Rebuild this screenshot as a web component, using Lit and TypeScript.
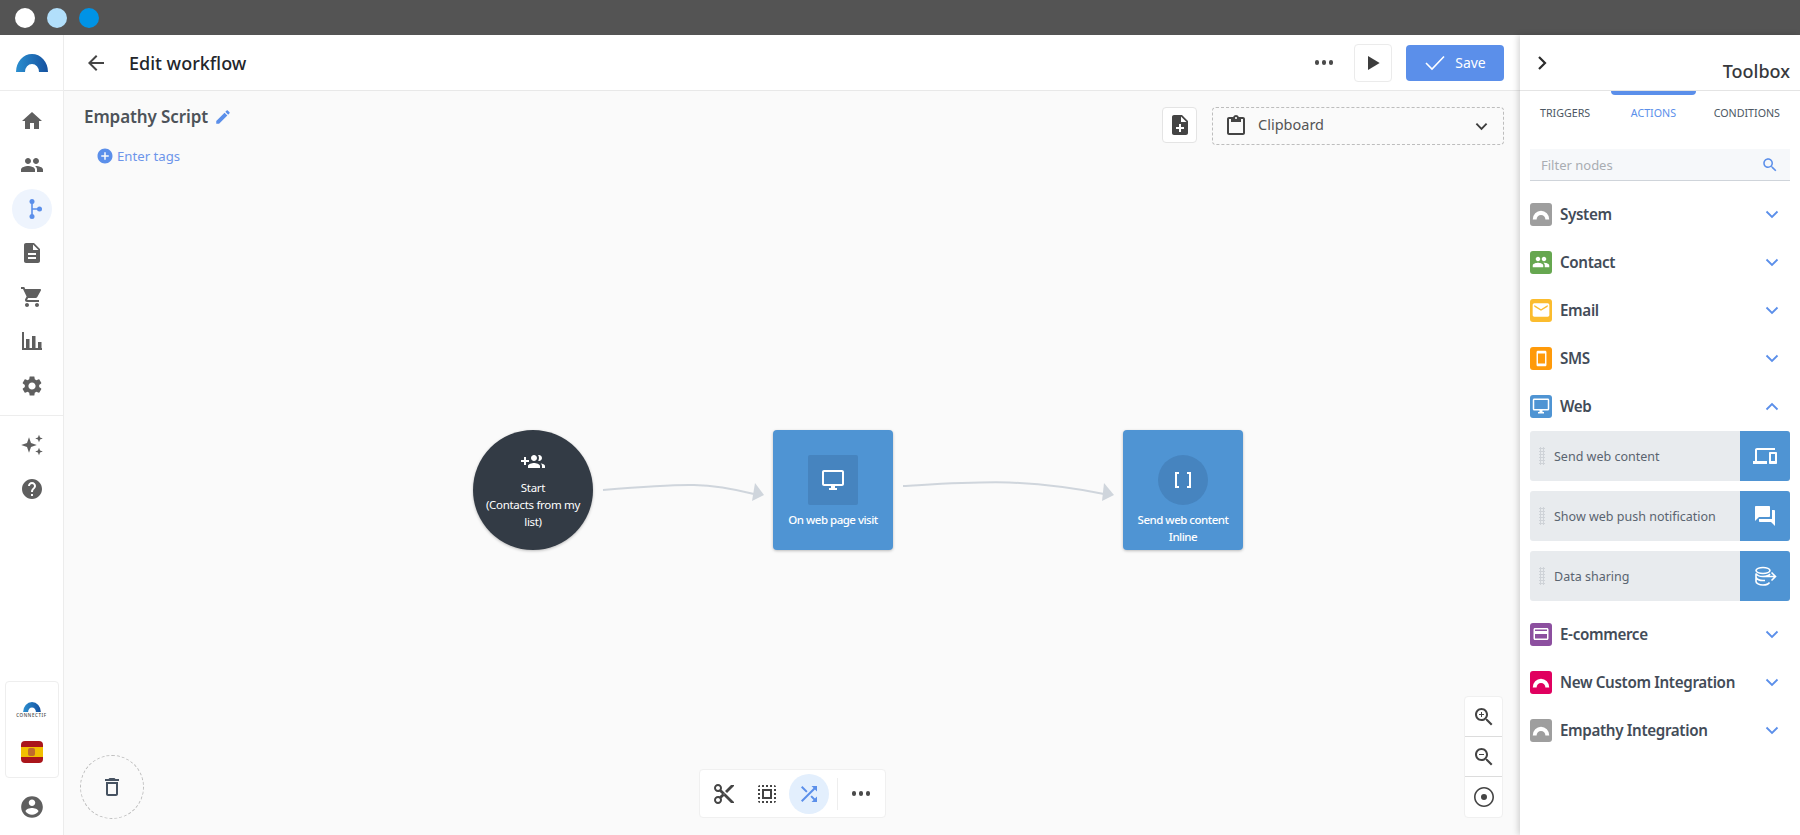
import { LitElement, html, css } from "lit";
import { customElement } from "lit/decorators.js";

const P: Record<string, string> = {
  home: "M10 20v-6h4v6h5v-8h3L12 3 2 12h3v8z",
  people: "M16 11c1.66 0 2.99-1.34 2.99-3S17.66 5 16 5c-1.66 0-3 1.34-3 3s1.34 3 3 3zm-8 0c1.66 0 2.99-1.34 2.99-3S9.66 5 8 5C6.34 5 5 6.34 5 8s1.34 3 3 3zm0 2c-2.33 0-7 1.17-7 3.5V19h14v-2.5c0-2.33-4.67-3.5-7-3.5zm8 0c-.29 0-.62.02-.97.05 1.16.84 1.97 1.97 1.97 3.45V19h6v-2.5c0-2.33-4.67-3.5-7-3.5z",
  doc: "M14 2H6c-1.1 0-1.99.9-1.99 2L4 20c0 1.1.89 2 1.99 2H18c1.1 0 2-.9 2-2V8l-6-6zm2 16H8v-2h8v2zm0-4H8v-2h8v2zm-3-5V3.5L18.5 9H13z",
  cart: "M7 18c-1.1 0-1.99.9-1.99 2S5.9 22 7 22s2-.9 2-2-.9-2-2-2zM1 2v2h2l3.6 7.59-1.35 2.45c-.16.28-.25.61-.25.96 0 1.1.9 2 2 2h12v-2H7.42c-.14 0-.25-.11-.25-.25l.03-.12.9-1.63h7.45c.75 0 1.41-.41 1.75-1.03l3.58-6.49c.08-.14.12-.31.12-.48 0-.55-.45-1-1-1H5.21l-.94-2H1zm16 16c-1.1 0-1.99.9-1.99 2s.89 2 1.99 2 2-.9 2-2-.9-2-2-2z",
  bars: "M2 3h2v16h18v2H2zM6 10h3.500v9H6zM12 7h3.500v12H12zM18 13h3.500v6H18z",
  gear: "M19.14 12.94c.04-.3.06-.61.06-.94 0-.32-.02-.64-.07-.94l2.03-1.58c.18-.14.23-.41.12-.61l-1.92-3.32c-.12-.22-.37-.29-.59-.22l-2.39.96c-.5-.38-1.03-.7-1.62-.94l-.36-2.54c-.04-.24-.24-.41-.48-.41h-3.84c-.24 0-.43.17-.47.41l-.36 2.54c-.59.24-1.13.57-1.62.94l-2.39-.96c-.22-.08-.47 0-.59.22L2.74 8.87c-.12.21-.08.47.12.61l2.03 1.58c-.05.3-.09.63-.09.94s.02.64.07.94l-2.03 1.58c-.18.14-.23.41-.12.61l1.92 3.32c.12.22.37.29.59.22l2.39-.96c.5.38 1.03.7 1.62.94l.36 2.54c.05.24.24.41.48.41h3.84c.24 0 .44-.17.47-.41l.36-2.54c.59-.24 1.13-.56 1.62-.94l2.39.96c.22.08.47 0 .59-.22l1.92-3.32c.12-.22.07-.47-.12-.61l-2.01-1.58zM12 15.6c-1.98 0-3.6-1.62-3.6-3.6s1.62-3.6 3.6-3.6 3.6 1.62 3.6 3.6-1.62 3.6-3.6 3.6z",
  sparkle: "M9 4.200L11 10l5.800 2L11 14l-2 5.800L7 14l-5.800-2L7 10zM19 1.800l1.100 2.600 2.700 1.100-2.700 1.100L19 9.200l-1.100-2.600-2.700-1.100 2.700-1.100zM19 14.800l1.100 2.600 2.700 1.100-2.700 1.100-1.100 2.600-1.100-2.600-2.700-1.100 2.700-1.100z",
  help: "M12 2C6.48 2 2 6.48 2 12s4.48 10 10 10 10-4.48 10-10S17.52 2 12 2zm1 17h-2v-2h2v2zm2.070-7.750l-.9.92C13.450 12.900 13 13.500 13 15h-2v-.5c0-1.100.45-2.100 1.170-2.830l1.240-1.260c.37-.36.59-.86.59-1.410 0-1.100-.9-2-2-2s-2 .9-2 2H8c0-2.210 1.790-4 4-4s4 1.790 4 4c0 .88-.36 1.680-.93 2.250z",
  account: "M12 2C6.48 2 2 6.48 2 12s4.48 10 10 10 10-4.48 10-10S17.52 2 12 2zm0 3c1.660 0 3 1.340 3 3s-1.340 3-3 3-3-1.340-3-3 1.340-3 3-3zm0 14.200c-2.500 0-4.710-1.280-6-3.220.03-1.990 4-3.080 6-3.080 1.990 0 5.970 1.090 6 3.080-1.290 1.940-3.500 3.220-6 3.220z",
  back: "M20 11H7.830l5.590-5.590L12 4l-8 8 8 8 1.410-1.410L7.830 13H20v-2z",
  edit: "M3 17.250V21h3.750L17.810 9.940l-3.750-3.750L3 17.250zM20.710 7.040c.39-.39.39-1.020 0-1.410l-2.340-2.340c-.39-.39-1.020-.39-1.410 0l-1.830 1.830 3.750 3.750 1.830-1.830z",
  addc: "M12 2C6.48 2 2 6.48 2 12s4.48 10 10 10 10-4.480 10-10S17.520 2 12 2zm5 11h-4v4h-2v-4H7v-2h4V7h2v4h4v2z",
  play: "M6 3.500v17l14-8.500z",
  noteadd: "M14 2H6c-1.100 0-1.990.9-1.990 2L4 20c0 1.100.89 2 1.990 2H18c1.100 0 2-.9 2-2V8l-6-6zm2 14h-3v3h-2v-3H8v-2h3v-3h2v3h3v2zm-3-7V3.500L18.500 9H13z",
  clip: "M19 3h-4.180C14.400 1.840 13.300 1 12 1s-2.400.84-2.820 2H5c-1.100 0-2 .9-2 2v14c0 1.100.9 2 2 2h14c1.100 0 2-.9 2-2V5c0-1.100-.9-2-2-2zm-7 0c.55 0 1 .45 1 1s-.45 1-1 1-1-.45-1-1 .45-1 1-1zm7 16H5V5h2v3h10V5h2v14z",
  search: "M15.500 14h-.79l-.28-.27C15.410 12.590 16 11.110 16 9.500 16 5.910 13.090 3 9.500 3S3 5.910 3 9.500 5.910 16 9.500 16c1.610 0 3.090-.59 4.230-1.570l.27.28v.79l5 4.990L20.490 19l-4.990-5zm-6 0C7.010 14 5 11.990 5 9.500S7.010 5 9.500 5 14 7.010 14 9.500 11.990 14 9.500 14z",
  desktop: "M21 2H3c-1.100 0-2 .9-2 2v12c0 1.100.9 2 2 2h7v2H8v2h8v-2h-2v-2h7c1.100 0 2-.9 2-2V4c0-1.100-.9-2-2-2zm0 14H3V4h18v12z",
  devices: "M4 6h18V4H4c-1.100 0-2 .9-2 2v11H0v3h14v-3H4V6zm19 2h-6c-.55 0-1 .45-1 1v10c0 .55.45 1 1 1h6c.55 0 1-.45 1-1V9c0-.55-.45-1-1-1zm-1 9h-4v-7h4v7z",
  forum: "M21 6h-2v9H6v2c0 .55.45 1 1 1h11l4 4V7c0-.55-.45-1-1-1zm-4 6V3c0-.55-.45-1-1-1H3c-.55 0-1 .45-1 1v14l4-4h10c.55 0 1-.45 1-1z",
  groupadd: "M8 10H5V7H3v3H0v2h3v3h2v-3h3v-2zm10 1c1.660 0 2.990-1.340 2.990-3S19.660 5 18 5c-.32 0-.63.05-.91.14.57.81.9 1.790.9 2.860s-.34 2.040-.9 2.860c.28.09.59.14.91.14zm-5 0c1.660 0 2.990-1.340 2.990-3S14.660 5 13 5s-3 1.340-3 3 1.340 3 3 3zm6.620 2.160c.83.73 1.380 1.660 1.380 2.840v2h3v-2c0-1.540-2.370-2.490-4.380-2.840zM13 13c-2 0-6 1-6 3v2h12v-2c0-2-4-3-6-3z",
  phone: "M17 1.010L7 1c-1.100 0-1.990.9-1.990 2v18c0 1.100.89 2 1.990 2h10c1.100 0 2-.9 2-2V3c0-1.100-.9-1.990-2-1.990zM17 19H7V5h10v14z",
  mail: "M20 4H4c-1.100 0-2 .9-2 2v12c0 1.100.9 2 2 2h16c1.100 0 2-.9 2-2V6c0-1.100-.9-2-2-2zm0 4l-8 5-8-5V6l8 5 8-5v2z",
  card: "M20 4H4c-1.110 0-1.990.89-1.990 2L2 18c0 1.110.89 2 2 2h16c1.110 0 2-.89 2-2V6c0-1.110-.89-2-2-2zm0 14H4v-6h16v6zm0-10H4V6h16v2z",
  shuffle: "M10.590 9.170L5.410 4 4 5.410l5.170 5.170 1.420-1.410zM14.500 4l2.040 2.040L4 18.590 5.410 20 17.960 7.460 20 9.500V4h-5.500zm.33 9.410l-1.410 1.410 3.130 3.130L14.500 20H20v-5.500l-2.040 2.040-3.130-3.130z",
  cut: "M9.640 7.640c.23-.5.36-1.050.36-1.640 0-2.210-1.790-4-4-4S2 3.790 2 6s1.790 4 4 4c.59 0 1.140-.13 1.640-.36L10 12l-2.360 2.360C7.140 14.130 6.590 14 6 14c-2.210 0-4 1.790-4 4s1.790 4 4 4 4-1.790 4-4c0-.59-.13-1.140-.36-1.640L12 14l7 7h3v-1L9.640 7.640zM6 8c-1.100 0-2-.89-2-2s.9-2 2-2 2 .89 2 2-.9 2-2 2zm0 12c-1.100 0-2-.89-2-2s.9-2 2-2 2 .89 2 2-.9 2-2 2zm6-7.500c-.28 0-.5-.22-.5-.5s.22-.5.5-.5.5.22.5.5-.22.5-.5.5zM19 3l-6 6 2 2 7-7V3z",
  select: "M3 5h2V3c-1.100 0-2 .9-2 2zm0 8h2v-2H3v2zm4 8h2v-2H7v2zM3 9h2V7H3v2zm10-6h-2v2h2V3zm6 0v2h2c0-1.100-.9-2-2-2zM5 21v-2H3c0 1.100.9 2 2 2zm-2-4h2v-2H3v2zM9 3H7v2h2V3zm2 18h2v-2h-2v2zm8-8h2v-2h-2v2zm0 8c1.100 0 2-.9 2-2h-2v2zm0-12h2V7h-2v2zm0 8h2v-2h-2v2zm-4 4h2v-2h-2v2zm0-16h2V3h-2v2zM7 17h10V7H7v10zm2-8h6v6H9V9z",
  trash: "M6 19c0 1.100.9 2 2 2h8c1.100 0 2-.9 2-2V7H6v12zM8 9h8v10H8V9zm7.500-5l-1-1h-5l-1 1H5v2h14V4z",
  zoomin: "M15.500 14h-.79l-.28-.27C15.410 12.590 16 11.110 16 9.500 16 5.910 13.090 3 9.500 3S3 5.910 3 9.500 5.910 16 9.500 16c1.610 0 3.090-.59 4.230-1.570l.27.28v.79l5 4.990L20.490 19l-4.990-5zm-6 0C7.010 14 5 11.990 5 9.500S7.010 5 9.500 5 14 7.010 14 9.500 11.990 14 9.500 14zM10 7H9v2H7v1h2v2h1v-2h2V9h-2z",
  zoomout: "M15.500 14h-.79l-.28-.27C15.410 12.590 16 11.110 16 9.500 16 5.910 13.090 3 9.500 3S3 5.910 3 9.500 5.910 16 9.500 16c1.610 0 3.090-.59 4.230-1.570l.27.28v.79l5 4.990L20.490 19l-4.990-5zm-6 0C7.010 14 5 11.990 5 9.500S7.010 5 9.500 5 14 7.010 14 9.500 11.990 14 9.500 14zM7 9h5v1H7z",
  target: "M12 9a3 3 0 1 0 0 6 3 3 0 0 0 0-6zm0-7C6.500 2 2 6.500 2 12s4.500 10 10 10 10-4.500 10-10S17.500 2 12 2zm0 18.400c-4.600 0-8.400-3.800-8.400-8.400S7.400 3.600 12 3.600s8.400 3.800 8.400 8.400-3.800 8.400-8.400 8.400z",
  arc: "M3 18A9 9.500 0 0 1 21 18H16.800A4.800 5 0 0 0 7.200 18Z",
};

const ic = (n: string, cls = "") => html`<svg class="ic ${cls}" viewBox="0 0 24 24"><path d=${P[n]}></path></svg>`;
const chev = (up = false) => html`<svg class="chev" viewBox="0 0 14 9"><path d=${up ? "M1.500 7.500L7 2l5.500 5.500" : "M1.500 1.500L7 7l5.500-5.500"}></path></svg>`;

const SECTIONS_A = [
  { label: "System", color: "#9e9e9e", icon: "arc" },
  { label: "Contact", color: "#66a750", icon: "people" },
  { label: "Email", color: "#fbbc2e", icon: "mail" },
  { label: "SMS", color: "#ff9a0a", icon: "phone" },
];
const SECTIONS_B = [
  { label: "E-commerce", color: "#8c4f9f", icon: "card" },
  { label: "New Custom Integration", color: "#e0005f", icon: "arc" },
  { label: "Empathy Integration", color: "#9e9e9e", icon: "arc" },
];

@customElement("app-root")
export class AppRoot extends LitElement {
  static styles = css`
    :host { display: flex; flex-direction: column; width: 100%; height: 100vh; overflow: hidden; font-family: "Noto Sans", "Open Sans", sans-serif; color: #434c58; background: #fff; }
    * { box-sizing: border-box; }
    .ic { width: 24px; height: 24px; fill: currentColor; display: block; flex: none; }
    .chev { width: 14px; height: 9px; fill: none; stroke: #5b8fea; stroke-width: 1.800; display: block; flex: none; }

    .titlebar { height: 35px; flex: none; background: #545454; display: flex; align-items: center; gap: 12px; padding-left: 15px; }
    .dot { width: 20px; height: 20px; border-radius: 50%; }
    .d1 { background: #fff; } .d2 { background: #b2dffb; } .d3 { background: #0093e6; }

    .main { flex: 1; display: flex; min-height: 0; }

    .side { width: 64px; flex: none; border-right: 1px solid #ececec; display: flex; flex-direction: column; background: #fff; }
    .logo-cell { height: 56px; flex: none; border-bottom: 1px solid #ececec; display: flex; align-items: center; justify-content: center; }
    .nav { display: flex; flex-direction: column; align-items: center; padding-top: 9.500px; color: #5f5f5f; }
    .nav-item { width: 40px; height: 40px; margin-bottom: 4.200px; display: flex; align-items: center; justify-content: center; border-radius: 50%; }
    .nav-item.active { background: #eef4fd; color: #5b8fea; }
    .nav-sep { align-self: stretch; height: 1px; background: #ededed; margin: 5px 0 9px; }
    .side-bottom { margin-top: auto; display: flex; flex-direction: column; align-items: center; color: #5f5f5f; padding-bottom: 15px; }
    .side-bottom .ic { width: 26px; height: 26px; }
    .org { width: 54px; height: 97px; border: 1px solid #eeeeee; border-radius: 4px; display: flex; flex-direction: column; align-items: center; padding-top: 20px; margin-bottom: 16px; }
    .org-name { font-size: 4.500px; letter-spacing: .6px; color: #444; line-height: 6px; font-weight: 500; }
    .flag { width: 22px; height: 22px; margin-top: 23px; border-radius: 4px; background: linear-gradient(#aa151b 0 26%, #f1bf00 26% 74%, #aa151b 74%); display: flex; align-items: center; justify-content: center; }
    .flag i { display: block; width: 7px; height: 8px; background: #c06a2c; border-radius: 2px; }

    .center { flex: 1; min-width: 0; display: flex; flex-direction: column; }
    .head { height: 56px; flex: none; border-bottom: 1px solid #e8e8e8; background: #fff; display: flex; align-items: center; padding: 0 16px 0 20px; color: #444; }
    .head .ic.back { width: 24px; height: 24px; margin-right: 21px; color: #444; }
    .head h1 { margin: 0; font-size: 18px; font-weight: 500; color: #23262b; flex: 1; }
    .dots { display: flex; gap: 2.500px; }
    .dots i { display: block; width: 4.500px; height: 4.500px; border-radius: 50%; background: #4a4a4a; }
    .head .dots { margin-right: 21px; }
    .playbtn { width: 38px; height: 38px; border: 1px solid #ebebeb; border-radius: 4px; display: flex; align-items: center; justify-content: center; margin-right: 14px; background: #fff; }
    .playbtn .ic { width: 20px; height: 20px; color: #3c3c3c; }
    .save { width: 98px; height: 36px; background: #5b8fea; color: #fff; border-radius: 4px; display: flex; align-items: center; justify-content: center; gap: 9px; font-size: 14px; }
    .save svg { width: 22px; height: 17px; fill: none; stroke: #fff; stroke-width: 1.600; }

    .canvas { flex: 1; position: relative; background: #fafafa; min-height: 0; }
    .canvas-top { display: flex; justify-content: space-between; align-items: flex-start; padding: 16px 16px 0 20px; }
    .name { display: flex; align-items: center; gap: 6px; font-size: 17px; font-weight: 600; color: #4d5359; line-height: 24px; margin-top: -2px; letter-spacing: -.1px; }
    .name .ic { width: 18px; height: 18px; color: #5b8fea; }
    .tags { display: flex; align-items: center; gap: 3px; margin: 15px 0 0 12px; color: #6c95ea; font-size: 13.200px; line-height: 24px; }
    .tags .ic { width: 18px; height: 18px; color: #5b8fea; }
    .clipwrap { display: flex; gap: 15px; }
    .addnote { width: 35px; height: 36px; background: #fff; border: 1px solid #e4e4e4; border-radius: 4px; display: flex; align-items: center; justify-content: center; color: #444; }
    .clipboard { width: 292px; height: 38px; border: 1px dashed #bdbdbd; border-radius: 4px; display: flex; align-items: center; padding: 0 15px 0 11px; color: #555; font-size: 14.500px; gap: 10px; }
    .clipboard span { flex: 1; padding-bottom: 4px; }
    .clipboard .ic { color: #444; }
    .clipboard .chev { stroke: #3c3c3c; width: 13px; stroke-width: 2; }

    .edges { position: absolute; left: 0; top: 0; width: 100%; height: 100%; pointer-events: none; }
    .edges path.l { fill: none; stroke: #cfd5dc; stroke-width: 2; }
    .edges path.a { fill: #cfd5dc; }
    .node { position: absolute; width: 120px; height: 120px; border-radius: 4px; background: #4f94d3; color: #fff; box-shadow: 0 1px 3px rgba(0,0,0,.25); display: flex; flex-direction: column; align-items: center; text-align: center; font-size: 11.500px; font-weight: 500; line-height: 17px; padding: 25px 5px 0; letter-spacing: -.5px; }
    .node.start { background: #333b45; border-radius: 50%; padding: 20px 10px 0; font-weight: 400; letter-spacing: -.3px; }
    .node.start .ic { width: 24px; height: 24px; margin-bottom: 5px; }
    .badge { width: 50px; height: 50px; background: #4684bf; border-radius: 2px; display: flex; align-items: center; justify-content: center; margin-bottom: 6px; flex: none; }
    .badge.round { border-radius: 50%; }
    .badge svg.br { width: 24px; height: 24px; fill: none; stroke: #fff; stroke-width: 2; }

    .trash { position: absolute; left: 16px; top: 664px; width: 64px; height: 64px; border: 1px dashed #bdbdbd; border-radius: 50%; display: flex; align-items: center; justify-content: center; color: #465261; }
    .tools { position: absolute; left: 635px; bottom: 17px; width: 187px; height: 49px; background: #fff; border: 1px solid #f0f0f0; border-radius: 4px; display: flex; align-items: center; padding-left: 4px; color: #444; }
    .tool { width: 40px; height: 40px; margin-right: 2.500px; border-radius: 50%; display: flex; align-items: center; justify-content: center; }
    .tool.on { background: #e3effd; color: #5b8fea; }
    .tools .sep { width: 1px; height: 32px; background: #eeeeee; margin: 0 14px 0 5px; }
    .zoom { position: absolute; right: 17px; bottom: 17px; width: 39px; background: #fff; border: 1px solid #f0f0f0; border-radius: 4px; display: flex; flex-direction: column; color: #444; }
    .zoom div { height: 40px; display: flex; align-items: center; justify-content: center; border-bottom: 1px solid #dcdcdc; }
    .zoom div:last-child { border-bottom: 0; }

    .panel { width: 280px; flex: none; background: #fff; box-shadow: -2px 0 6px rgba(0,0,0,.16); display: flex; flex-direction: column; position: relative; z-index: 2; }
    .phead { height: 56px; flex: none; border-bottom: 1px solid #e4e4e4; position: relative; display: flex; align-items: flex-start; justify-content: space-between; padding: 18px 10px 0 13px; color: #2c2c2c; }
    .phead .ic { width: 18px; height: 20px; }
    .phead b { font-size: 18px; font-weight: 500; margin-top: 5px; color: #37393d; line-height: 26px; }
    .tabs { display: flex; justify-content: space-between; padding: 14px 20px 0; height: 58px; flex: none; align-items: flex-start; font-size: 10.700px; color: #4c5763; position: relative; line-height: 16px; }
    .tabs .act { color: #5b8fea; margin-left: 3px; }
    .tabs .bar { position: absolute; left: 91px; top: 0; width: 85px; height: 4px; background: #5b8fea; border-radius: 0 0 4px 4px; }
    .filter { margin: 0 10px; height: 32px; flex: none; background: #f6f8fa; border-bottom: 1px solid #cfd4da; display: flex; align-items: center; padding: 0 11px; font-size: 13px; color: #a9adb2; justify-content: space-between; }
    .filter .ic { width: 18px; height: 18px; color: #5b8fea; }
    .sections { padding: 9px 10px 0; display: flex; flex-direction: column; }
    .sec { height: 48px; display: flex; align-items: center; flex: none; font-size: 15.200px; letter-spacing: -.35px; font-weight: 600; color: #434c58; padding-right: 11px; }
    .sec span { flex: 1; margin-left: 8px; }
    .tile { width: 22px; height: 23px; border-radius: 3px; display: flex; align-items: center; justify-content: center; color: #fff; flex: none; }
    .tile .ic { width: 18px; height: 18px; }
    .tile .ic.arc { width: 22px; height: 22px; }
    .tile .ic.mail { width: 20px; height: 20px; }
    .tile .ic.phone { width: 17px; height: 17px; }
    .items { display: flex; flex-direction: column; gap: 10px; margin: 1px 0 9px; }
    .item { height: 50px; background: #e8ebee; border-radius: 3px; overflow: hidden; display: flex; align-items: center; font-size: 12.500px; color: #5a6470; }
    .grip { width: 6px; height: 18px; margin: 0 9px; flex: none; background-image: radial-gradient(circle, #cfd3d8 1px, transparent 1.200px); background-size: 3px 3px; }
    .item span { flex: 1; }
    .item div.ico { width: 50px; height: 50px; background: #4f94d3; color: #fff; display: flex; align-items: center; justify-content: center; }
    .item svg.db { width: 24px; height: 24px; fill: none; stroke: #fff; stroke-width: 1.600; }
  `;

  private sec(s: { label: string; color: string; icon: string }, up = false) {
    return html`<div class="sec">
      <div class="tile" style="background:${s.color}">${ic(s.icon, s.icon)}</div>
      <span>${s.label}</span>${chev(up)}
    </div>`;
  }

  render() {
    const d3 = html`<div class="dots"><i></i><i></i><i></i></div>`;
    return html`
      <div class="titlebar"><div class="dot d1"></div><div class="dot d2"></div><div class="dot d3"></div></div>
      <div class="main">
        <aside class="side">
          <div class="logo-cell">
            <svg width="32" height="18" viewBox="0 0 32 18"><defs><linearGradient id="lg" x1="0" x2="1" y1="0" y2="0"><stop offset="0" stop-color="#2b8fd0"></stop><stop offset="1" stop-color="#15519f"></stop></linearGradient></defs><path fill="url(#lg)" d="M0 18A16 18 0 0 1 32 18H23A7 8 0 0 0 9 18Z"></path></svg>
          </div>
          <nav class="nav">
            ${["home", "people"].map((n) => html`<div class="nav-item">${ic(n)}</div>`)}
            <div class="nav-item active">
              <svg width="24" height="24" viewBox="0 0 24 24" fill="currentColor"><path d="M11.200 5h1.600v14h-1.600zM12 11.200h7v1.600h-7z"></path><circle cx="12" cy="4.500" r="2.500"></circle><circle cx="12" cy="19.500" r="2.500"></circle><circle cx="19.500" cy="12" r="2.500"></circle></svg>
            </div>
            ${["doc", "cart", "bars", "gear"].map((n) => html`<div class="nav-item">${ic(n)}</div>`)}
            <div class="nav-sep"></div>
            <div class="nav-item">${ic("sparkle")}</div>
            <div class="nav-item">${ic("help")}</div>
          </nav>
          <div class="side-bottom">
            <div class="org">
              <svg width="18" height="10" viewBox="0 0 32 18"><path fill="url(#lg)" d="M0 18A16 18 0 0 1 32 18H23A7 8 0 0 0 9 18Z"></path></svg>
              <div class="org-name">CONNECTIF</div>
              <div class="flag"><i></i></div>
            </div>
            ${ic("account")}
          </div>
        </aside>

        <div class="center">
          <header class="head">
            ${ic("back", "back")}
            <h1>Edit workflow</h1>
            ${d3}
            <div class="playbtn">${ic("play")}</div>
            <div class="save"><svg viewBox="0 0 22 17"><path d="M2 9l6 6L20 2.500"></path></svg>Save</div>
          </header>
          <div class="canvas">
            <div class="canvas-top">
              <div>
                <div class="name">Empathy Script ${ic("edit")}</div>
                <div class="tags">${ic("addc")}Enter tags</div>
              </div>
              <div class="clipwrap">
                <div class="addnote">${ic("noteadd")}</div>
                <div class="clipboard">${ic("clip")}<span>Clipboard</span>${chev()}</div>
              </div>
            </div>

            <svg class="edges">
              <path class="l" d="M539 399C575 396 605 393.500 630 394C650 394.500 670 398 690 403"></path>
              <path class="a" d="M691 392L700 404L688 410Z"></path>
              <path class="l" d="M839 395C875 393 910 390.500 945 391.500C980 393 1015 398 1040 403"></path>
              <path class="a" d="M1040 392L1050 404L1038 410Z"></path>
            </svg>

            <div class="node start" style="left:409px;top:339px">
              ${ic("groupadd")}
              <div>Start<br />(Contacts from my list)</div>
            </div>
            <div class="node" style="left:709px;top:339px">
              <div class="badge">${ic("desktop")}</div>
              <div>On web page visit</div>
            </div>
            <div class="node" style="left:1059px;top:339px">
              <div class="badge round"><svg class="br" viewBox="0 0 24 24"><path d="M8 5H5v14h3M16 5h3v14h-3"></path></svg></div>
              <div>Send web content<br />Inline</div>
            </div>

            <div class="trash">${ic("trash")}</div>
            <div class="tools">
              <div class="tool">${ic("cut")}</div>
              <div class="tool">${ic("select")}</div>
              <div class="tool on">${ic("shuffle")}</div>
              <div class="sep"></div>
              ${d3}
            </div>
            <div class="zoom">
              <div>${ic("zoomin")}</div>
              <div>${ic("zoomout")}</div>
              <div>${ic("target")}</div>
            </div>
          </div>
        </div>

        <aside class="panel">
          <div class="phead">
            <svg class="ic" viewBox="0 0 18 20"><path d="M6 4l6 6-6 6" fill="none" stroke="currentColor" stroke-width="2.200"></path></svg>
            <b>Toolbox</b>
          </div>
          <div class="tabs">
            <div class="bar"></div>
            <div>TRIGGERS</div><div class="act">ACTIONS</div><div>CONDITIONS</div>
          </div>
          <div class="filter">Filter nodes ${ic("search")}</div>
          <div class="sections">
            ${SECTIONS_A.map((s) => this.sec(s))}
            ${this.sec({ label: "Web", color: "#4f94d3", icon: "desktop" }, true)}
            <div class="items">
              <div class="item"><div class="grip"></div><span>Send web content</span><div class="ico">${ic("devices")}</div></div>
              <div class="item"><div class="grip"></div><span>Show web push notification</span><div class="ico">${ic("forum")}</div></div>
              <div class="item"><div class="grip"></div><span>Data sharing</span><div class="ico">
                <svg class="db" viewBox="0 0 24 24"><ellipse cx="10" cy="6.500" rx="7" ry="3"></ellipse><path d="M17 10c-1 1.500-3.500 2.500-7 2.500S4 11.500 3 9.500v8c0 1.700 3 3.500 7 3.500 3 0 5.500-1 6.500-2.500M3 13.500c1 1.700 3.500 3 7 3h2M13 12.500h9M18.500 8.500l4 4-4 4"></path></svg>
              </div></div>
            </div>
            ${SECTIONS_B.map((s) => this.sec(s))}
          </div>
        </aside>
      </div>
    `;
  }
}
